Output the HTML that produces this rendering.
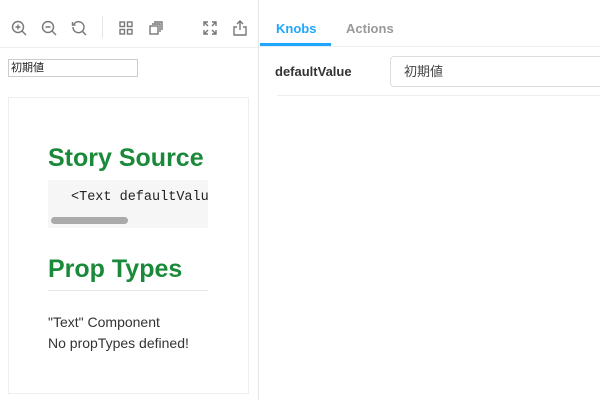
<!DOCTYPE html><html><head><style>
body{margin:0;width:600px;height:400px;background:#fff;font-family:"Liberation Sans","Noto Sans CJK JP",sans-serif;position:relative;overflow:hidden}
.a{position:absolute}
svg{stroke:#777;fill:none;stroke-width:1.4}
</style></head><body>
<div class="a" style="left:0;top:0;width:258px;height:47px;border-bottom:1px solid #eee"></div>
<div class="a" style="left:258px;top:0;width:1px;height:400px;background:#e4e4e4"></div>
<div class="a" style="left:102px;top:16px;width:1px;height:22px;background:#e4e4e4"></div>
<svg class="a" style="left:11px;top:20px" width="16" height="16"><circle cx="7" cy="7" r="5.5"/><path d="M11 11l4 4M4.5 7h5M7 4.5v5"/></svg>
<svg class="a" style="left:41px;top:20px" width="16" height="16"><circle cx="7" cy="7" r="5.5"/><path d="M11 11l4 4M4.5 7h5"/></svg>
<svg class="a" style="left:71px;top:20px" width="16" height="16"><path d="M3 4a5.5 5.5 0 1 1-1 3M1.5 2v3h3"/><path d="M11 11l4 4"/></svg>
<svg class="a" style="left:119px;top:21px" width="14" height="14"><rect x="1" y="1" width="4.5" height="4.5"/><rect x="8.5" y="1" width="4.5" height="4.5"/><rect x="1" y="8.5" width="4.5" height="4.5"/><rect x="8.5" y="8.5" width="4.5" height="4.5"/></svg>
<svg class="a" style="left:149px;top:21px" width="14" height="14"><rect x="1" y="5" width="8" height="8"/><path d="M3 3h8v8M5 1h8v8"/></svg>
<svg class="a" style="left:203px;top:21px" width="14" height="14"><path d="M1 5V1h4M1 1l4 4M13 5V1H9M13 1L9 5M1 9v4h4M1 13l4-4M13 9v4H9M13 13L9 9"/></svg>
<svg class="a" style="left:233px;top:20px" width="14" height="16"><path d="M7 1v9M4 4l3-3 3 3M4 7H1v8h12V7h-3"/></svg>
<div class="a" style="left:8px;top:59px;width:126px;height:16px;border:1px solid #ccc;font-size:11px;line-height:16px;padding-left:2px;color:#222">初期値</div>
<div class="a" style="left:8px;top:97px;width:239px;height:295px;border:1px solid #eee"></div>
<div class="a" style="left:48px;top:144px;font-size:25px;font-weight:bold;color:#1a8a3a">Story Source</div>
<div class="a" style="left:48px;top:180px;width:160px;height:48px;background:#f6f6f6;overflow:hidden"><div style="position:absolute;left:23px;top:10px;font-family:'Liberation Mono',monospace;font-size:13.5px;color:#222;white-space:nowrap">&lt;Text defaultValue</div><div style="position:absolute;left:3px;top:37px;width:77px;height:7px;border-radius:4px;background:#aaa"></div></div>
<div class="a" style="left:48px;top:255px;font-size:25px;font-weight:bold;color:#1a8a3a">Prop Types</div>
<div class="a" style="left:48px;top:290px;width:160px;height:1px;background:#e8e8e8"></div>
<div class="a" style="left:48px;top:312px;font-size:14px;color:#333;line-height:21px">"Text" Component<br>No propTypes defined!</div>
<div class="a" style="left:259px;top:46px;width:341px;height:1px;background:#eee"></div>
<div class="a" style="left:276px;top:21px;font-size:13px;font-weight:bold;color:#1ea7fd">Knobs</div>
<div class="a" style="left:346px;top:21px;font-size:13px;font-weight:bold;color:#999">Actions</div>
<div class="a" style="left:260px;top:43px;width:71px;height:3px;background:#1ea7fd"></div>
<div class="a" style="left:275px;top:64px;font-size:13px;font-weight:bold;color:#333">defaultValue</div>
<div class="a" style="left:390px;top:56px;width:215px;border:1px solid #ddd;border-radius:4px;font-size:13px;line-height:29px;padding-left:13px;color:#444;box-sizing:border-box;height:31px">初期値</div>
<div class="a" style="left:277px;top:95px;width:323px;height:1px;background:#eee"></div>
</body></html>
